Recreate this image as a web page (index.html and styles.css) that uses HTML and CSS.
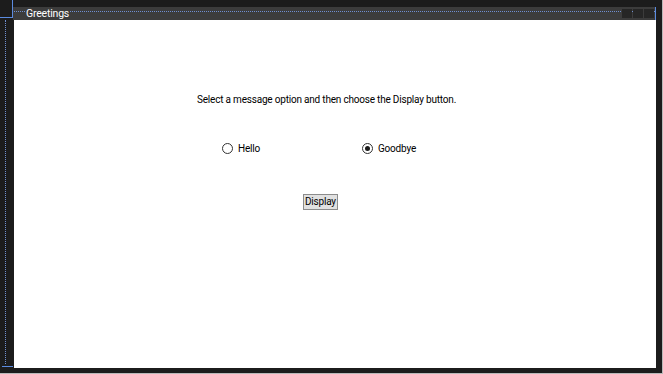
FILE: index.html
```html
<!DOCTYPE html>
<html lang="en">
<head>
  <meta charset="UTF-8" />
  <title>Greetings</title>
  <link rel="stylesheet" href="styles.css">
</head>
<body>
  <div class="frame">
    <!-- designer adornments on the left rail -->
    <span class="rail-dots"></span>
    <span class="corner-top"></span>
    <span class="corner-bottom"></span>

    <div class="window">
      <div class="title-bar">
        <span class="title-text">Greetings</span>
        <span class="title-line"></span>
        <div class="caption-buttons">
          <span class="caption-btn"></span>
          <span class="caption-btn"></span>
          <span class="caption-btn"></span>
        </div>
      </div>

      <div class="client">
        <p class="prompt">Select a message option and then choose the Display button.</p>

        <div class="options">
          <label class="option">
            <span class="radio"></span>
            <span>Hello</span>
          </label>
          <label class="option">
            <span class="radio checked"></span>
            <span>Goodbye</span>
          </label>
        </div>

        <div class="actions">
          <button class="display-btn">Display</button>
        </div>
      </div>
    </div>
  </div>
</body>
</html>
```

FILE: styles.css
```css
body {
  margin: 0;
  padding: 0;
  background: #1c1c1c;
}

.frame {
  position: relative;
  width: 663px;
  height: 374px;
  box-sizing: border-box;
  padding: 7px 6px 5px 13px;
  background: #1c1c1c;
  border-right: 1px solid #b9b9b9;
  border-bottom: 1px solid #b9b9b9;
  font-family: Roboto, "Open Sans", sans-serif;
  letter-spacing: -0.2px;
}

/* Adornments */
.rail-dots {
  position: absolute;
  left: 5px;
  top: 20px;
  height: 344px;
  border-left: 1px dotted #6f8fd0;
}

.corner-top {
  position: absolute;
  left: 0;
  top: 0;
  width: 12px;
  height: 17px;
  border-right: 1px solid #5b8be0;
  border-bottom: 1px solid #5b8be0;
}

.corner-bottom {
  position: absolute;
  left: 2px;
  top: 366px;
  width: 11px;
  border-top: 1px solid #5b8be0;
}

/* Window */
.window {
  display: flex;
  flex-direction: column;
  height: 100%;
}

.title-bar {
  position: relative;
  display: flex;
  align-items: center;
  height: 13px;
  background: #3c3c3c;
  border-right: 1px solid #5b8be0;
}

.title-line {
  position: absolute;
  left: 1px;
  right: 0;
  top: 4px;
  border-top: 1px dotted #6f8fd0;
}

.title-text {
  position: relative;
  z-index: 1;
  margin-left: 12px;
  padding: 0 1px;
  background: #3c3c3c;
  color: #ffffff;
  font-size: 10.5px;
  line-height: 13px;
}

.caption-buttons {
  position: relative;
  z-index: 1;
  display: flex;
  gap: 1px;
  margin-left: auto;
  margin-right: 1px;
}

.caption-btn {
  width: 10px;
  height: 9px;
  background: #262626;
}

.client {
  flex: 1;
  background: #ffffff;
  margin-left: 1px;
  padding-top: 72px;
  color: #000000;
  font-size: 10px;
}

.prompt {
  margin: 0 0 0 183px;
  line-height: 15px;
}

.options {
  display: flex;
  margin: 34px 0 0 208px;
}

.option {
  display: flex;
  align-items: center;
  gap: 5px;
  width: 140px;
  line-height: 15px;
}

.radio {
  box-sizing: border-box;
  display: flex;
  align-items: center;
  justify-content: center;
  width: 11px;
  height: 11px;
  border: 1px solid #333333;
  border-radius: 50%;
  background: #ffffff;
}

.radio.checked::after {
  content: "";
  width: 5px;
  height: 5px;
  border-radius: 50%;
  background: #1a1a1a;
}

.actions {
  margin: 38px 0 0 289px;
}

.display-btn {
  box-sizing: border-box;
  height: 16px;
  padding: 0 1px;
  font-family: inherit;
  font-size: 10px;
  letter-spacing: inherit;
  line-height: 14px;
  color: #000000;
  background: #e1e1e1;
  border: 1px solid #8c8c8c;
  border-radius: 0;
}
```
